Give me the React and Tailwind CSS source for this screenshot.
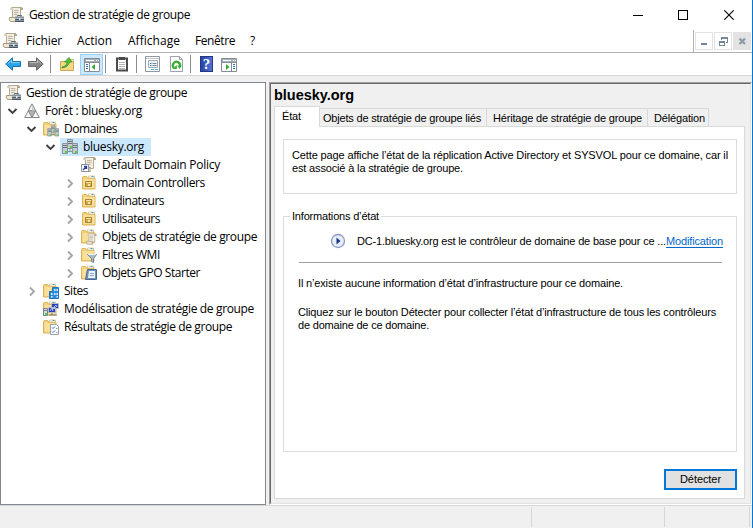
import { useLayoutEffect, useRef, useState } from "react";

// Text that is tracked so that it fills a given width.
function Fit({ w, className = "", children }) {
  const ref = useRef(null);
  const [spacing, setSpacing] = useState(0);
  useLayoutEffect(() => {
    const natural = ref.current.getBoundingClientRect().width;
    setSpacing((w - natural) / String(children).length);
  }, [w, children]);
  return (
    <span ref={ref} style={{ letterSpacing: spacing + "px" }} className={"inline-block shrink-0 whitespace-pre " + className}>
      {children}
    </span>
  );
}

function Svg({ w = 16, h = 16, children, className = "" }) {
  return (
    <svg width={w} height={h} viewBox={`0 0 ${w} ${h}`} className={"block shrink-0 " + className} fill="none">
      {children}
    </svg>
  );
}

function ScrollShape() {
  return (
    <>
      <path d="M3.500 .5h9.500q1.500 0 1.500 2H12.500v9H4.500V3Z" fill="#f3eee0" stroke="#b3aa93" />
      <path d="M12.500.5q2 0 2 2h-2Z" fill="#cfc6ad" stroke="#a39a80" strokeWidth=".8" />
      <path d="M3.500.5q-1.500 0-1.500 1.500t1.500 1H5V1Z" fill="#d8cfb6" />
      <path d="M1.500 10.500h8q-1.500 2 0 4H2.500q-2-1.500-1-4Z" fill="#efe7d0" stroke="#a39a80" />
      <path d="M6 3.500h4.500M6 5.500h4.500M6 7.500h3.500" stroke="#b9b3a4" />
    </>
  );
}

function GpmcIcon() {
  return (
    <Svg>
      <ScrollShape />
      <path d="M9.500 9.500v-1h4v1" stroke="#5a6670" />
      <path d="M7 9.500h9V15H7Z" fill="#8593a0" />
      <path d="M7 11.500h9" stroke="#a9b5bf" />
      <path d="M7 12.500h9M7 14.500h9" stroke="#4d5964" />
      <path d="M11 11h1.500v2H11Z" fill="#e8edf2" />
    </Svg>
  );
}

function FolderShape() {
  return (
    <g transform="translate(-1 0)">
      <path d="M1.500 2.500q0-1 1-1h3l1 1.500h7.500v11h-12.500Z" fill="#f2d27c" stroke="#dcb359" />
      <path d="M7.500 1h6v2h-6Z" fill="#fff" stroke="#d0b060" strokeWidth=".6" />
      <path d="M10.500 1.500h2" stroke="#3d9be0" />
      <path d="M2.500 4h11v9h-11Z" fill="#f9e09a" />
    </g>
  );
}

function Servers() {
  return (
    <>
      <path d="M5.500.5h5v9h-5Z" fill="#c5cbd0" stroke="#8a949c" />
      <path d="M.5 4.500h5v10h-5Z" fill="#c5cbd0" stroke="#8a949c" />
      <path d="M10.500 4.500h5v10h-5Z" fill="#c5cbd0" stroke="#8a949c" />
      <path d="M6 2.500h4M6 4.500h4M1 6.500h4M1 8.500h4M11 6.500h4M11 8.500h4" stroke="#69747d" />
      <path d="M3 12h2v2H3ZM13 12h2v2h-2ZM8 7h2v2H8Z" fill="#3fdc3a" />
      <path d="M8 10v3M5.500 12.500h5" stroke="#8a949c" />
    </>
  );
}

function NodeIcon({ kind }) {
  if (kind === "gpmc") return <GpmcIcon />;
  if (kind === "forest")
    return (
      <Svg>
        <path d="M8 .8 15.300 14.500H.7Z" fill="#f4f4f4" stroke="#858585" />
        <path d="M4.300 7.700h7.400L8 14.500Z" fill="#b4b4b4" stroke="#858585" />
        <path d="M8 2 11 7.500H8Z" fill="#ccc" />
      </Svg>
    );
  if (kind === "domain")
    return (
      <Svg>
        <Servers />
      </Svg>
    );
  if (kind === "link")
    return (
      <Svg>
        <ScrollShape />
        <path d="M.5 7.500h7v7h-7Z" fill="#fff" stroke="#8a93a5" />
        <path d="m2 13 3-3M3 9.500h2.500V12" stroke="#2a3c9c" strokeWidth="1.400" />
      </Svg>
    );
  if (kind === "ou")
    return (
      <Svg className="ml-px -mr-px">
        <FolderShape />
        <path d="M3.500 6.500h6v5h-6Z" fill="#d2a945" stroke="#a5822f" />
        <path d="M4 7h5v1H4ZM6 9h2v2H6Z" fill="#f9e7ac" />
      </Svg>
    );
  return (
    <Svg>
      <FolderShape />
      {kind === "domains" && (
        <g transform="translate(4.300 4.300) scale(.74)">
          <Servers />
        </g>
      )}
      {kind === "gpos" && (
        <g transform="translate(4.500 4.500) scale(.74)">
          <ScrollShape />
        </g>
      )}
      {kind === "wmi" && (
        <>
          <path d="M6.500 7.500h9l-3 4v4l-2-1v-3Z" fill="#a9bccb" stroke="#6d8496" />
          <path d="M7 7.500h8" stroke="#e9f1f7" />
        </>
      )}
      {kind === "starter" && (
        <>
          <path d="M6.500 4.500h9v10h-11Z" fill="#6f92be" stroke="#4a688d" />
          <path d="M8 6h6v7H7Z" fill="#edf2f8" />
          <path d="M9 8.500h4M8.800 10.500h4" stroke="#8ba2bd" />
        </>
      )}
      {kind === "sites" && (
        <>
          <path d="M9.500 4.500h6v11h-9v-7h3Z" fill="#2e8bdc" stroke="#1d72bd" />
          <path d="M11 6h1.500v2H11ZM13.500 6H15v2h-1.500ZM8 10h1.500v2H8ZM11 10h1.500v2H11ZM13.500 10H15v2h-1.500ZM8 13h1.500v1.500H8ZM13.500 13H15v1.500h-1.500Z" fill="#d9efff" />
        </>
      )}
      {kind === "model" && (
        <>
          <path d="M8.500 2.500h7v5h-7ZM5.500 6.500h7v5h-7Z" fill="#2b3fb8" stroke="#b9bcc2" />
          <path d="m7 10 2-3 1 3M11 6l2-2 1 2" stroke="#a9c8ff" />
          <path d="M.5 7.500h4v7h-4Z" fill="#d5d9dd" stroke="#7d848b" />
          <path d="M1 9.500h3M6 14h8M9 12v2" stroke="#777e85" />
          <path d="M2 12h2v2H2Z" fill="#3fdc3a" />
        </>
      )}
      {kind === "results" && (
        <>
          <path d="M7.500 5.500h6l2 2v8h-8Z" fill="#fff" stroke="#9aa3ac" />
          <path d="m9 8.500 1 1 2-2M9 12.500l1 1 2-2" stroke="#2f77c9" />
          <path d="M13 9.500h1.500M13 13.500h1.500" stroke="#999" />
        </>
      )}
    </Svg>
  );
}

const nodes = [
  { kind: "gpmc", text: "Gestion de stratégie de groupe", w: 161, row: "pl-[5px]" },
  { kind: "forest", text: "Forêt : bluesky.org", w: 97, row: "pl-[5px]", open: true },
  { kind: "domains", text: "Domaines", w: 53, row: "pl-[24px]", open: true },
  { kind: "domain", text: "bluesky.org", w: 61, row: "pl-[43px]", open: true, selected: true },
  { kind: "link", text: "Default Domain Policy", w: 118, row: "pl-[81px]" },
  { kind: "ou", text: "Domain Controllers", w: 103, row: "pl-[62px]", open: false },
  { kind: "ou", text: "Ordinateurs", w: 62, row: "pl-[62px]", open: false },
  { kind: "ou", text: "Utilisateurs", w: 58, row: "pl-[62px]", open: false },
  { kind: "gpos", text: "Objets de stratégie de groupe", w: 155, row: "pl-[62px]", open: false },
  { kind: "wmi", text: "Filtres WMI", w: 58, row: "pl-[62px]", open: false },
  { kind: "starter", text: "Objets GPO Starter", w: 98, row: "pl-[62px]", open: false },
  { kind: "sites", text: "Sites", w: 24, row: "pl-[24px]", open: false },
  { kind: "model", text: "Modélisation de stratégie de groupe", w: 190, row: "pl-[43px]" },
  { kind: "results", text: "Résultats de stratégie de groupe", w: 168, row: "pl-[43px]" },
];

function TreeRow({ node }) {
  return (
    <div className={"flex h-[18px] items-center " + node.row}>
      {node.open !== undefined && (
        <Svg w={14} h={16} className="mr-[5px]">
          {node.open ? (
            <path d="m2.500 6 4 4 4-4" stroke="#404040" strokeWidth="1.900" />
          ) : (
            <path d="m5 4.500 4 4-4 4" stroke="#a6a6a6" strokeWidth="1.900" />
          )}
        </Svg>
      )}
      <div className={"-ml-[3px] flex h-[18px] items-center pl-[2px] " + (node.selected ? "bg-[#cce8ff] pr-[7px]" : "")}>
        <NodeIcon kind={node.kind} />
        <Fit w={node.w} className="ml-[5px]">
          {node.text}
        </Fit>
      </div>
    </div>
  );
}

function Arrow({ flip, fill, stroke }) {
  return (
    <Svg w={16} h={16} className={flip ? "-scale-x-100" : ""}>
      <path d="M.8 8 7.500 1.800v3.700h8v5h-8v3.700Z" fill={fill} stroke={stroke} />
      <path d="M3 7.500 6.500 4.300v2.300h8" stroke="#fff" strokeOpacity=".45" />
    </Svg>
  );
}

function PaneWindow({ right }) {
  return (
    <Svg w={16} h={14}>
      <path d="M.5.5h15v13H.5Z" fill="#fff" stroke="#848e98" />
      <path d="M1 1h14v3H1Z" fill="#a7b0b9" />
      <path d="M2 2.500h8" stroke="#fff" />
      <path d="M12 2.500h1M14 2.500h1" stroke="#fff" />
      <path d="M1 4.500h14" stroke="#848e98" />
      {right ? (
        <>
          <path d="M10.500 4v9" stroke="#848e98" />
          <path d="M12 6.500h2M12 8.500h2M12 10.500h2" stroke="#2d76b8" />
          <path d="m5 6 3.500 3L5 12Z" fill="#39a935" />
        </>
      ) : (
        <>
          <path d="M5.500 4v9" stroke="#848e98" />
          <path d="M2 6.500h2M2 8.500h2M2 10.500h2" stroke="#2d76b8" />
          <path d="m11 6-3.500 3 3.500 3Z" fill="#39a935" />
        </>
      )}
    </Svg>
  );
}

function Toolbar() {
  const sep = "h-[18px] w-px shrink-0 bg-[#8d8d8d]";
  return (
    <div className="flex h-[23px] shrink-0 items-center border-b border-[#d7d7d7] bg-white pl-[5px]">
      <Arrow fill="#2ba3e8" stroke="#1673ae" />
      <div className="ml-[7px]">
        <Arrow flip fill="#858585" stroke="#666" />
      </div>
      <div className={sep + " ml-[6px]"} />
      <Svg className="ml-[9px]">
        <path d="M.5 5.500h13v9H.5Z" fill="#f4d888" stroke="#d0a850" />
        <path d="M8 3.500h5.500v2H8Z" fill="#fff" stroke="#c99b3d" strokeWidth=".7" />
        <path d="M2 11q5-1 5-5H4.500L9 1.500 12 6H9.500q-1 5-7.500 6Z" fill="#52c234" stroke="#2c8c20" strokeWidth=".7" />
      </Svg>
      <div className="ml-[4px] flex h-[21px] w-[23px] shrink-0 items-center justify-center border border-[#99d1ff] bg-[#cce8ff] pt-[2px]">
        <PaneWindow />
      </div>
      <div className={sep + " ml-[2px]"} />
      <Svg w={14} h={16} className="ml-[9px]">
        <path d="M2 2.500h10v12H2Z" fill="#fff" stroke="#4b4b4b" strokeWidth="2" />
        <path d="M4 1h6v3H4Z" fill="#4b4b4b" />
        <path d="M4 6.500h6M4 8.500h6M4 10.500h6M4 12.500h6" stroke="#b4b4b4" />
      </Svg>
      <div className={sep + " ml-[7px]"} />
      <Svg className="ml-[8px]">
        <path d="M.5 .5h14v15H.5Z" fill="#fff" stroke="#8f99a3" />
        <path d="M1 2.500h13" stroke="#c3c9cf" />
        <path d="M3.500 4.500h9v7h-9Z" fill="#eef1f4" stroke="#a2abb5" />
        <path d="M5 7.500h1.500M5 9.500h1.500" stroke="#2d86c8" />
        <path d="M7.500 7.500h4M7.500 9.500h4" stroke="#7f8a95" />
        <path d="M6 13.500h3M10 13.500h3" stroke="#43b4e8" />
      </Svg>
      <Svg w={13} h={16} className="ml-[9px]">
        <path d="M.5.5h9l3 3v12H.5Z" fill="#fff" stroke="#9ba3ab" />
        <path d="M9.500.5v3h3" stroke="#9ba3ab" />
        <path d="M3.800 11.800a3.600 3.600 0 1 1 5.900-1" stroke="#34ae2f" strokeWidth="2.100" />
        <path d="M2.500 13h4.300V9Z" fill="#34ae2f" />
        <path d="M7.300 9.500h4.500L9.500 13Z" fill="#34ae2f" />
      </Svg>
      <div className={sep + " ml-[7px]"} />
      <div className="ml-[9px] flex h-4 w-[13px] shrink-0 items-center justify-center border border-[#25387e] bg-[#3d5fc6] bg-linear-to-r from-[#2643a8] to-[#5272d4] font-['Liberation_Serif',serif] text-[15px] leading-none font-bold text-white">
        ?
      </div>
      <div className="mt-[2px] ml-[8px]">
        <PaneWindow right />
      </div>
    </div>
  );
}

function Tab({ box, w, children }) {
  return (
    <div className={"flex h-[18px] shrink-0 items-center border-t border-r border-[#d9d9d9] pt-px " + box}>
      <Fit w={w}>{children}</Fit>
    </div>
  );
}

function Details() {
  return (
    <div className="flex h-[423px] w-[483px] shrink-0 border-t border-r border-b border-l border-t-[#a0a0a0] border-r-white border-b-white border-l-[#a0a0a0]">
      <div className="flex min-w-0 flex-1 flex-col border border-t-[#696969] border-r-[#e3e3e3] border-b-[#e3e3e3] border-l-[#696969] pr-[5px] pb-[4px] pl-[3px] font-['Liberation_Sans',Arial,sans-serif] text-[11px] leading-[13px]">
        <div className="flex h-[22px] shrink-0 items-center">
          <Fit w={80} className="text-[14.500px] leading-[20px] font-bold">
            bluesky.org
          </Fit>
        </div>
        <div className="flex h-[20px] shrink-0 items-end">
          <div className="z-10 -mb-px flex h-[21px] w-[46px] shrink-0 items-center border-t border-r border-l border-[#d9d9d9] bg-white pb-[2px] pl-[7px]">
            <Fit w={19}>État</Fit>
          </div>
          <Tab box="w-[167px] pl-[3px]" w={158}>Objets de stratégie de groupe liés</Tab>
          <Tab box="w-[161px] pl-[6px]" w={149}>Héritage de stratégie de groupe</Tab>
          <Tab box="w-[61px] pl-[6px]" w={51}>Délégation</Tab>
        </div>
        <div className="flex flex-1 flex-col border border-[#d9d9d9] bg-white pt-[12px] pr-[7px] pl-[8px]">
          <div className="h-[55px] shrink-0 border border-[#dcdcdc] pt-[9px] pl-[8px]">
            <Fit w={436} className="block">Cette page affiche l’état de la réplication Active Directory et SYSVOL pour ce domaine, car il</Fit>
            <Fit w={171} className="block">est associé à la stratégie de groupe.</Fit>
          </div>
          <fieldset className="mt-[16px] h-[242px] shrink-0 border border-[#dcdcdc]">
            <legend className="ml-[6px] flex h-[13px] pr-[2px] pl-[2px]">
              <Fit w={87}>Informations d’état</Fit>
            </legend>
            <div className="mt-[9px] flex h-[19px] items-center pl-[46px]">
              <Svg className="-mt-px">
                <circle cx="8" cy="8" r="6.500" fill="#e8eef8" stroke="#8b9cc4" strokeWidth="1.300" />
                <path d="M6.500 4.500 10.500 8l-4 3.500Z" fill="#1c3580" />
              </Svg>
              <Fit w={309} className="ml-[11px]">DC-1.bluesky.org est le contrôleur de domaine de base pour ce ...</Fit>
              <Fit w={57} className="text-[#0066cc] underline underline-offset-2">Modification</Fit>
            </div>
            <div className="mt-[11px] ml-[15px] h-px w-[423px] bg-[#a0a0a0]" />
            <div className="mt-[14px] ml-[14px]">
              <Fit w={325} className="block">Il n’existe aucune information d’état d’infrastructure pour ce domaine.</Fit>
            </div>
            <div className="mt-[16px] ml-[14px]">
              <Fit w={418} className="block">Cliquez sur le bouton Détecter pour collecter l’état d’infrastructure de tous les contrôleurs</Fit>
              <Fit w={131} className="block">de domaine de ce domaine.</Fit>
            </div>
          </fieldset>
          <button className="mt-[17px] flex h-[21px] w-[73px] shrink-0 items-center justify-center self-end border-2 border-[#0078d7] bg-[#e1e1e1]">
            <Fit w={41}>Détecter</Fit>
          </button>
        </div>
      </div>
    </div>
  );
}

export default function App() {
  return (
    <div className="flex h-[528px] w-[753px] flex-col overflow-hidden border-r border-[#0078d7] bg-[#f0f0f0] font-['Open_Sans','Noto_Sans',sans-serif] text-[12px] leading-[16px] text-black">
      <div className="flex h-[30px] shrink-0 items-center bg-white pl-[8px]">
        <GpmcIcon />
        <Fit w={161} className="ml-[5px]">Gestion de stratégie de groupe</Fit>
        <div className="ml-auto flex items-center pr-[18px]">
          <div className="mr-[35px] h-px w-[10px] bg-black" />
          <div className="mr-[36px] h-[10px] w-[10px] border border-black" />
          <Svg w={10} h={10}>
            <path d="m.3.3 9.400 9.400M9.700.3.3 9.700" stroke="#000" strokeWidth="1.100" />
          </Svg>
        </div>
      </div>
      <div className="flex h-[23px] shrink-0 items-center border-b border-[#b2b0b5] bg-white pl-[2px]">
        <GpmcIcon />
        <Fit w={36} className="ml-[8px]">Fichier</Fit>
        <Fit w={35} className="ml-[15px]">Action</Fit>
        <Fit w={52} className="ml-[16px]">Affichage</Fit>
        <Fit w={40} className="ml-[15px]">Fenêtre</Fit>
        <Fit w={6} className="ml-[15px]">?</Fit>
        <div className="ml-auto flex h-[22px] items-center gap-px border-l border-[#b2b0b5] pr-px pl-px">
          <div className="h-[18px] w-[18px] border border-[#e3e3e3]">
            <Svg>
              <path d="M5 10h6v2H5Z" fill="#74879a" />
            </Svg>
          </div>
          <div className="h-[18px] w-[18px] border border-[#e3e3e3]">
            <Svg>
              <path d="M6 4h7v6h-2V9h1V6H7v1H6ZM4 8h6v5H4Z" fill="#74879a" />
              <path d="M5 10h4v2H5Z" fill="#fff" />
            </Svg>
          </div>
          <div className="h-[18px] w-[18px] bg-[#e3e3e3] p-px">
            <Svg>
              <path d="m5.500 5.500 5.500 5.500M11 5.500 5.500 11" stroke="#8b9aa8" strokeWidth="2.200" />
            </Svg>
          </div>
        </div>
      </div>
      <Toolbar />
      <div className="flex shrink-0 pt-[6px]">
        <div className="mr-[3px] h-[423px] w-[266px] shrink-0 border border-[#828790] bg-white pt-px">
          {nodes.map((node) => (
            <TreeRow key={node.text} node={node} />
          ))}
        </div>
        <Details />
      </div>
      <div className="flex h-[23px] shrink-0 justify-end border-t border-[#d7d7d7] pt-px pr-[2px]">
        <div className="h-[20px] w-[133px] border-l border-[#d7d7d7]" />
        <div className="h-[20px] w-[86px] border-r border-l border-[#d7d7d7]" />
      </div>
    </div>
  );
}
